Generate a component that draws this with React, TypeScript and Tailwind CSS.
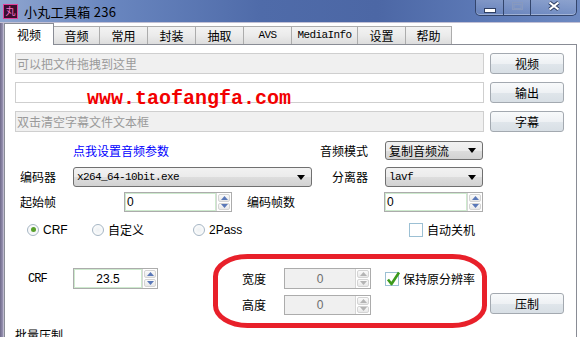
import React from "react";

function Arrow() {
  return (
    <svg width="8" height="5" viewBox="0 0 8 5">
      <path d="M0 0h8L4 5z" fill="#000" />
    </svg>
  );
}

function Combo({ className, value, mono }: { className: string; value: string; mono?: boolean }) {
  return (
    <div
      className={`flex items-center justify-between rounded-[3px] border border-[#707070] bg-[linear-gradient(180deg,#f2f2f2_0%,#ebebeb_50%,#dddddd_51%,#d2d2d2_100%)] pl-[3px] pr-[6px] ${className}`}
    >
      <span
        className={
          mono
            ? "font-['Liberation_Mono',monospace] text-[11px] tracking-[-0.6px] leading-none"
            : "text-[12px] leading-none"
        }
      >
        {value}
      </span>
      <Arrow />
    </div>
  );
}

function SpinArrows({ disabled }: { disabled?: boolean }) {
  const c = disabled ? "#b4b4b4" : "#5a78b8";
  return (
    <div className="w-[15px] flex flex-col gap-[1px] p-[1px] border-l border-[#d6d6d6] bg-white">
      <div className="flex-1 flex items-center justify-center rounded-[2px] border border-[#d4d4d4] bg-[linear-gradient(180deg,#fafafa,#e8e8e8)]">
        <svg width="7" height="4" viewBox="0 0 7 4">
          <path d="M3.5 0L7 4H0z" fill={c} />
        </svg>
      </div>
      <div className="flex-1 flex items-center justify-center rounded-[2px] border border-[#d4d4d4] bg-[linear-gradient(180deg,#fafafa,#e8e8e8)]">
        <svg width="7" height="4" viewBox="0 0 7 4">
          <path d="M0 0h7L3.5 4z" fill={c} />
        </svg>
      </div>
    </div>
  );
}

function Spin({
  className,
  value,
  center,
  disabled,
}: {
  className: string;
  value: string;
  center?: boolean;
  disabled?: boolean;
}) {
  return (
    <div className={`flex border border-[#acacac] ${className}`}>
      <div
        className={`flex-1 flex items-center font-['Liberation_Sans',sans-serif] text-[12px] leading-none ${
          center ? "justify-center" : "pl-[1px]"
        } ${disabled ? "bg-[#f0f0f0] text-[#6d6d6d]" : "bg-white border border-[#cdeacd]"}`}
      >
        {value}
      </div>
      <SpinArrows disabled={disabled} />
    </div>
  );
}

function Btn({ children, className }: { children: React.ReactNode; className: string }) {
  return (
    <div
      className={`flex items-center justify-center rounded-[3px] border border-[#a3a9b0] bg-[linear-gradient(180deg,#f8fafb_0%,#eef1f4_50%,#e0e6eb_51%,#d8dfe5_100%)] text-[12px] leading-none ${className}`}
    >
      {children}
    </div>
  );
}

function Field({ text }: { text: string }) {
  return (
    <div className="h-[21px] flex items-center pl-[1px] border border-[#cfcfcf] bg-[#f0f0f0] text-[#9a9a9a] text-[12px] leading-none">
      {text}
    </div>
  );
}

function Radio({ checked }: { checked?: boolean }) {
  return (
    <span className="w-[12px] h-[12px] rounded-full border border-[#a6b6c4] bg-[radial-gradient(circle,#eef1f3_0%,#ffffff_100%)] flex items-center justify-center">
      {checked && <span className="w-[5px] h-[5px] rounded-full bg-[#58a02a]" />}
    </span>
  );
}

function Check({ checked, className }: { checked?: boolean; className?: string }) {
  return (
    <span className={`relative w-[14px] h-[14px] border border-[#9cc0d4] bg-white ${className ?? ""}`}>
      {checked && (
        <svg className="absolute left-0 -top-[2px]" width="15" height="16" viewBox="0 0 15 16">
          <path d="M2 8.5L5.5 13L13 1.5" stroke="#3c9a1c" strokeWidth="2.6" fill="none" strokeLinejoin="round" />
        </svg>
      )}
    </span>
  );
}

function Tab({ label, className, active, mono }: { label: string; className: string; active?: boolean; mono?: boolean }) {
  const font = mono
    ? "font-['Liberation_Mono',monospace] text-[11px] tracking-[-0.6px]"
    : "text-[12px]";
  if (active) {
    return (
      <div
        className={`relative z-10 -mb-px h-[22px] flex items-center justify-center bg-white border border-b-0 border-[#898c95] leading-none ${font} ${className}`}
      >
        {label}
      </div>
    );
  }
  return (
    <div
      className={`h-[18px] flex items-center justify-center border-t border-r border-[#acacac] bg-[linear-gradient(180deg,#f3f3f3_0%,#ebebeb_50%,#dddddd_100%)] leading-none ${font} ${className}`}
    >
      {label}
    </div>
  );
}

function TitleBar() {
  return (
    <div className="h-[22px] flex items-start justify-between bg-[linear-gradient(90deg,#8fa5cf_0%,#6a87c0_18%,#4f6ba9_45%,#4c67a5_65%,#5e7bb8_85%,#6d89c1_100%)]">
      <div className="h-[22px] flex items-center pl-[3px]">
        <div className="w-[15px] h-[15px] flex items-center justify-center border border-[#e0409a] bg-[#3a0d2e] text-[#ff70c4] text-[10px] leading-none">
          丸
        </div>
        <span className="ml-[6px] text-[13px] tracking-[0.3px] leading-none text-black">小丸工具箱 236</span>
      </div>
      <div className="mr-[3px] flex h-[16px] rounded-b-[5px] border border-t-0 border-[#33456c] bg-[linear-gradient(180deg,rgba(255,255,255,0.22),rgba(255,255,255,0.06))] shadow-[inset_0_-1px_0_rgba(255,255,255,0.35)] overflow-hidden">
        <div className="w-[28px] flex items-end justify-center pb-[2px] border-r border-[#33456c]">
          <svg width="12" height="5" viewBox="0 0 12 5">
            <rect x="0.5" y="0.5" width="11" height="4" fill="#fff" stroke="#2f3f63" />
          </svg>
        </div>
        <div className="w-[27px] flex items-start justify-center pt-[2px] border-r border-[#33456c]">
          <svg width="11" height="8" viewBox="0 0 11 8">
            <rect x="0.5" y="0.5" width="10" height="7" fill="none" stroke="#8799bf" strokeWidth="1" />
            <rect x="2" y="2.5" width="7" height="4" fill="none" stroke="#8799bf" strokeWidth="1" />
          </svg>
        </div>
        <div className="w-[45px] flex items-start justify-center pt-[1px]">
          <svg width="12" height="10" viewBox="0 0 12 10">
            <path d="M1.5 1.5L10.5 8.5M10.5 1.5L1.5 8.5" stroke="#2f3f63" strokeWidth="4" />
            <path d="M1.5 1.5L10.5 8.5M10.5 1.5L1.5 8.5" stroke="#fff" strokeWidth="2.2" />
          </svg>
        </div>
      </div>
    </div>
  );
}

export default function App() {
  return (
    <div className="w-[580px] h-[337px] overflow-hidden flex flex-col bg-white text-black font-['Noto_Sans_CJK_SC',sans-serif] text-[12px]">
      <TitleBar />
      <div className="h-px bg-[#c2c0d4]" />
      <div className="flex flex-1 min-h-0">
        <div className="w-[4px] bg-[linear-gradient(90deg,#6f6a8a_0%,#948fae_65%,#d4d1e0_100%)]" />
        <div className="w-[576px] flex flex-col">
          <div className="flex items-end h-[21px]">
            <Tab label="视频" active className="w-[50px]" />
            <Tab label="音频" className="w-[46px]" />
            <Tab label="常用" className="w-[48px]" />
            <Tab label="封装" className="w-[48px]" />
            <Tab label="抽取" className="w-[48px]" />
            <Tab label="AVS" mono className="w-[48px]" />
            <Tab label="MediaInfo" mono className="w-[66px]" />
            <Tab label="设置" className="w-[48px]" />
            <Tab label="帮助" className="w-[46px]" />
          </div>

          <div className="relative w-[573px] flex-1 flex flex-col border-x border-t border-[#898c95] leading-none">
            {/* 文件 */}
            <div className="mt-[8px] ml-[10px] flex gap-[6px]">
              <div className="w-[469px] flex flex-col gap-[8px]">
                <Field text="可以把文件拖拽到这里" />
                <div className="relative h-[21px] border border-[#cfcfcf] bg-white">
                  <span className="absolute left-[71px] top-[6px] whitespace-nowrap font-['Liberation_Mono',monospace] font-bold text-[20px] leading-[20px] text-[#f20000]">
                    www.taofangfa.com
                  </span>
                </div>
                <Field text="双击清空字幕文件文本框" />
              </div>
              <div className="w-[74px] flex flex-col gap-[8px]">
                <Btn className="h-[21px]">视频</Btn>
                <Btn className="h-[21px]">输出</Btn>
                <Btn className="h-[21px]">字幕</Btn>
              </div>
            </div>

            <div className="mt-[9px] flex h-[19px] items-center">
              <div className="w-[68px]" />
              <div className="w-[239px] text-[#0000ff]">点我设置音频参数</div>
              <div className="w-[56px] text-right">音频模式</div>
              <Combo className="ml-[17px] w-[98px] h-[19px]" value="复制音频流" />
            </div>

            <div className="mt-[7px] flex h-[20px] items-center">
              <div className="w-[68px] pl-[15px]">编码器</div>
              <Combo className="w-[239px] h-[20px]" value="x264_64-10bit.exe" mono />
              <div className="w-[56px] text-right">分离器</div>
              <Combo className="ml-[17px] w-[98px] h-[20px]" value="lavf" mono />
            </div>

            <div className="mt-[5px] flex h-[20px] items-center">
              <div className="w-[119px] pl-[15px]">起始帧</div>
              <Spin className="w-[108px] h-[20px]" value="0" />
              <div className="w-[152px] pl-[15px]">编码帧数</div>
              <Spin className="w-[99px] h-[20px]" value="0" />
            </div>

            <div className="mt-[10px] flex h-[15px] items-center">
              <div className="ml-[22px] w-[65px] flex items-center gap-[4px]">
                <Radio checked />
                <span className="font-['Liberation_Sans',sans-serif]">CRF</span>
              </div>
              <div className="w-[101px] flex items-center gap-[4px]">
                <Radio />
                <span>自定义</span>
              </div>
              <div className="w-[216px] flex items-center gap-[4px]">
                <Radio />
                <span className="font-['Liberation_Sans',sans-serif]">2Pass</span>
              </div>
              <Check />
              <span className="ml-[4px]">自动关机</span>
            </div>

            <div className="mt-[31px] flex">
              <div className="w-[68px] h-[21px] pl-[23px] flex items-center font-['Liberation_Mono',monospace] text-[12px] tracking-[-1px]">
                CRF
              </div>
              <Spin className="w-[85px] h-[21px]" value="23.5" center />
              <div className="ml-[84px] w-[248px] flex flex-col gap-[6px]">
                <div className="h-[21px] flex items-center">
                  <span className="w-[42px]">宽度</span>
                  <Spin className="w-[87px] h-[21px]" value="0" center disabled />
                  <Check checked className="ml-[14px]" />
                  <span className="ml-[4px]">保持原分辨率</span>
                </div>
                <div className="h-[20px] flex items-center">
                  <span className="w-[42px]">高度</span>
                  <Spin className="w-[87px] h-[20px]" value="0" center disabled />
                </div>
              </div>
              <Btn className="mt-[25px] w-[74px] h-[21px]">压制</Btn>
            </div>

            <div className="mt-[14px] pl-[10px]">批量压制</div>

            {/* 标注圈 */}
            <svg className="absolute left-[208px] top-[209px]" width="274" height="74" viewBox="0 0 274 74">
              <rect x="2.5" y="2.5" width="269" height="69" rx="32" ry="20" fill="none" stroke="#e8202a" strokeWidth="5" />
            </svg>
          </div>
        </div>
      </div>
    </div>
  );
}
